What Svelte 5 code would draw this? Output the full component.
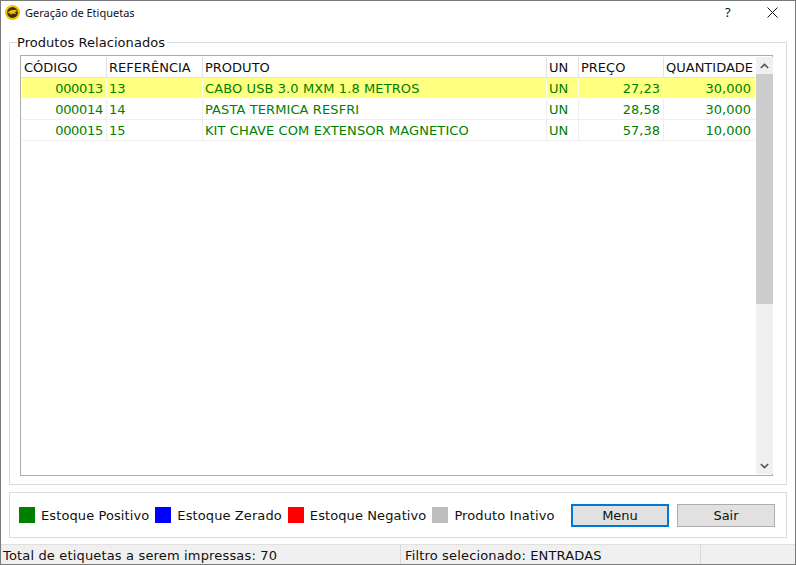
<script>
  const columns = [
    { label: 'CÓDIGO', cls: 'num' },
    { label: 'REFERÊNCIA', cls: '' },
    { label: 'PRODUTO', cls: '' },
    { label: 'UN', cls: '' },
    { label: 'PREÇO', cls: 'num' },
    { label: 'QUANTIDADE', cls: 'num' }
  ];
  const rows = [
    ['000013', '13', 'CABO USB 3.0 MXM 1.8 METROS', 'UN', '27,23', '30,000'],
    ['000014', '14', 'PASTA TERMICA RESFRI', 'UN', '28,58', '30,000'],
    ['000015', '15', 'KIT CHAVE COM EXTENSOR MAGNETICO', 'UN', '57,38', '10,000']
  ];
  const legend = [
    { label: 'Estoque Positivo', color: '#008000' },
    { label: 'Estoque Zerado', color: '#0000ff' },
    { label: 'Estoque Negativo', color: '#ff0000' },
    { label: 'Produto Inativo', color: '#bdbdbd' }
  ];
</script>

<div class="window">
  <header class="titlebar">
    <svg class="logo" width="15" height="15" viewBox="0 0 16 16">
      <circle cx="8" cy="8" r="8" fill="#f2c200" />
      <circle cx="8" cy="8" r="5.8" fill="#3a3020" />
      <path d="M2.5 8.5 L6 5.5 L11 5 L13.5 6.5 L10.5 7.5 L12 9.5 L8.5 9 L6 10.5 L5.5 8.8 Z" fill="#f2c200" />
    </svg>
    <span class="title">Geração de Etiquetas</span>
    <span class="help">?</span>
    <svg class="close" width="11" height="11" viewBox="0 0 11 11">
      <path d="M0.5 0.5 L10.5 10.5 M10.5 0.5 L0.5 10.5" stroke="#111" stroke-width="1" fill="none" />
    </svg>
  </header>

  <main class="content">
    <fieldset class="products">
      <legend>Produtos Relacionados</legend>
      <div class="grid-box">
        <div class="grid">
          <div class="row head">
            {#each columns as c}
              <div class="cell">{c.label}</div>
            {/each}
          </div>
          {#each rows as r, i}
            <div class="row data" class:selected={i === 0}>
              {#each r as v, j}
                <div class="cell" class:num={columns[j].cls === 'num'}>{v}</div>
              {/each}
            </div>
          {/each}
        </div>
        <div class="scrollbar">
          <div class="arrow">
            <svg width="9" height="6" viewBox="0 0 9 6"><path d="M0.8 5 L4.5 1.4 L8.2 5" fill="none" stroke="#555" stroke-width="1.6" /></svg>
          </div>
          <div class="thumb"></div>
          <div class="track"></div>
          <div class="arrow">
            <svg width="9" height="6" viewBox="0 0 9 6"><path d="M0.8 1 L4.5 4.6 L8.2 1" fill="none" stroke="#555" stroke-width="1.6" /></svg>
          </div>
        </div>
      </div>
    </fieldset>

    <section class="footer-panel">
      <div class="legend">
        {#each legend as l}
          <div class="legend-item">
            <span class="swatch" style="background:{l.color}"></span>
            <span>{l.label}</span>
          </div>
        {/each}
      </div>
      <button class="btn primary">Menu</button>
      <button class="btn">Sair</button>
    </section>
  </main>

  <footer class="status">
    <div class="s1">Total de etiquetas a serem impressas: 70</div>
    <div class="s2">Filtro selecionado: ENTRADAS</div>
    <div class="s3"></div>
  </footer>
</div>

<style>
  :global(body) {
    margin: 0;
    background: #fff;
  }
  .window {
    box-sizing: border-box;
    width: 796px;
    height: 565px;
    border: 1px solid #7a7a7a;
    display: flex;
    flex-direction: column;
    font-family: 'DejaVu Sans', Verdana, sans-serif;
    font-size: 13px;
    color: #101010;
    overflow: hidden;
  }
  .titlebar {
    box-sizing: border-box;
    height: 26px;
    display: flex;
    align-items: center;
    padding-left: 4px;
    padding-bottom: 4px;
    flex: none;
  }
  .logo {
    margin-right: 5px;
  }
  .title {
    font-family: 'Noto Sans', 'Open Sans', sans-serif;
    font-size: 11px;
    flex: 1;
    color: #111;
  }
  .help {
    font-family: 'Noto Sans', sans-serif;
    font-size: 13px;
    margin-right: 34px;
    width: 8px;
  }
  .close {
    margin-right: 17px;
  }
  .content {
    flex: 1;
    display: flex;
    flex-direction: column;
    padding: 0 8px;
    min-height: 0;
  }
  .products {
    margin: 8px 0 0;
    padding: 5px 13px 8px 10px;
    height: 450px;
    box-sizing: border-box;
    border: 1px solid #dcdcdc;
    min-width: 0;
    flex: none;
  }
  legend {
    padding: 0 2px 0 0;
    margin-left: -3px;
    line-height: 15px;
    letter-spacing: 0.05px;
    background: #fff;
    color: #111;
  }
  .grid-box {
    box-sizing: border-box;
    height: 421px;
    border: 1px solid #ababab;
    display: flex;
    padding: 1px;
  }
  .grid {
    width: 733px;
    flex: none;
  }
  .row {
    display: grid;
    grid-template-columns: 85px 96px 344px 32px 85px 91px;
    height: 21px;
    line-height: 21px;
  }
  .head .cell {
    border-right: 1px solid #e2e2e2;
    border-bottom: 1px solid #e2e2e2;
    box-sizing: border-box;
    height: 21px;
    padding-left: 2px;
    white-space: nowrap;
    overflow: hidden;
  }
  .head .cell:last-child {
    border-right: none;
  }
  .data {
    color: #008000;
  }
  .data .cell {
    box-sizing: border-box;
    height: 21px;
    padding: 0 2px;
    border-right: 1px solid #efefef;
    border-bottom: 1px solid #efefef;
    white-space: nowrap;
    letter-spacing: 0.1px;
  }
  .data .cell:last-child {
    border-right: none;
  }
  .data .num {
    text-align: right;
    letter-spacing: 0;
    padding-right: 3px;
  }
  .data .cell:first-child {
    letter-spacing: -0.3px;
  }
  .data .cell:last-child.num {
    padding-right: 4px;
  }
  .selected .cell {
    background: #ffff80;
    border-color: #fdfdf0;
  }
  .scrollbar {
    width: 17px;
    margin-left: 1px;
    display: flex;
    flex-direction: column;
    background: #f0f0f0;
    flex: none;
  }
  .arrow {
    height: 17px;
    display: flex;
    align-items: center;
    justify-content: center;
    flex: none;
  }
  .thumb {
    height: 230px;
    background: #cdcdcd;
    flex: none;
  }
  .track {
    flex: 1;
  }
  .footer-panel {
    margin-top: 7px;
    height: 46px;
    box-sizing: border-box;
    border: 1px solid #dcdcdc;
    display: flex;
    align-items: center;
    padding-left: 9px;
    flex: none;
  }
  .legend {
    display: flex;
    width: 552px;
    flex: none;
    gap: 6px;
    letter-spacing: 0.1px;
  }
  .legend-item {
    display: flex;
    align-items: center;
    gap: 6px;
    color: #111;
  }
  .swatch {
    width: 16px;
    height: 16px;
    flex: none;
  }
  .btn {
    box-sizing: border-box;
    width: 98px;
    height: 23px;
    background: #e1e1e1;
    border: 1px solid #adadad;
    font: inherit;
    color: #111;
    padding: 0;
  }
  .primary {
    border: 2px solid #0078d7;
    margin-right: 8px;
  }
  .status {
    height: 20px;
    flex: none;
    background: #f0f0f0;
    display: flex;
    align-items: stretch;
    border-top: 1px solid #e0e0e0;
    box-sizing: border-box;
    line-height: 19px;
    color: #111;
    letter-spacing: 0.16px;
  }
  .s1 {
    width: 399px;
    box-sizing: border-box;
    padding: 1px 0 0 2px;
    flex: none;
  }
  .s2 {
    width: 300px;
    box-sizing: border-box;
    padding: 1px 0 0 4px;
    border-left: 1px solid #d8d8d8;
    flex: none;
  }
  .s3 {
    flex: 1;
    border-left: 1px solid #d8d8d8;
  }
</style>
